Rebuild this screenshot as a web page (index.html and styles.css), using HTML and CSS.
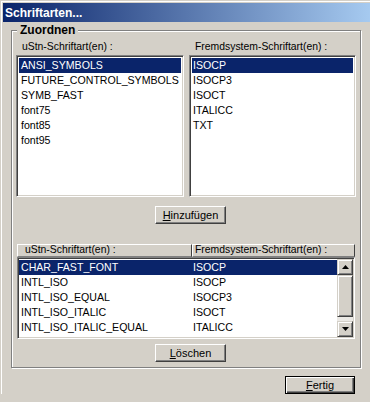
FILE: index.html
```html
<!DOCTYPE html>
<html lang="de">
<head>
  <meta charset="UTF-8" />
  <title>Schriftarten...</title>
  <link rel="stylesheet" href="styles.css">
</head>
<body>

  <div class="window">
    <div class="caption">Schriftarten...</div>

    <div class="client">
      <fieldset class="group">
        <legend>Zuordnen</legend>

        <!-- Two source lists -->
        <div class="pick">
          <div class="pick-col pick-col-a">
            <div class="label">uStn-Schriftart(en) :</div>
            <ul class="listbox">
              <li class="sel">ANSI_SYMBOLS</li>
              <li>FUTURE_CONTROL_SYMBOLS</li>
              <li>SYMB_FAST</li>
              <li>font75</li>
              <li>font85</li>
              <li>font95</li>
            </ul>
          </div>
          <div class="pick-col pick-col-b">
            <div class="label">Fremdsystem-Schriftart(en) :</div>
            <ul class="listbox">
              <li class="sel">ISOCP</li>
              <li>ISOCP3</li>
              <li>ISOCT</li>
              <li>ITALICC</li>
              <li>TXT</li>
            </ul>
          </div>
        </div>

        <div class="btn-row">
          <button class="btn"><u>H</u>inzufügen</button>
        </div>

        <!-- Mapping list -->
        <div class="map">
          <div class="map-head">
            <span class="hcell hcell-a">uStn-Schriftart(en) :</span>
            <span class="hcell hcell-b">Fremdsystem-Schriftart(en) :</span>
          </div>
          <div class="map-list">
            <div class="map-rows">
              <div class="map-row sel"><span class="c1">CHAR_FAST_FONT</span><span>ISOCP</span></div>
              <div class="map-row"><span class="c1">INTL_ISO</span><span>ISOCP</span></div>
              <div class="map-row"><span class="c1">INTL_ISO_EQUAL</span><span>ISOCP3</span></div>
              <div class="map-row"><span class="c1">INTL_ISO_ITALIC</span><span>ISOCT</span></div>
              <div class="map-row"><span class="c1">INTL_ISO_ITALIC_EQUAL</span><span>ITALICC</span></div>
            </div>
            <div class="vscroll">
              <div class="sb-btn">
                <svg width="7" height="4" viewBox="0 0 7 4"><path d="M3.5 0 L7 4 L0 4 Z"/></svg>
              </div>
              <div class="sb-thumb"></div>
              <div class="sb-track"></div>
              <div class="sb-btn">
                <svg width="7" height="4" viewBox="0 0 7 4"><path d="M0 0 L7 0 L3.5 4 Z"/></svg>
              </div>
            </div>
          </div>
        </div>

        <div class="btn-row btn-row-low">
          <button class="btn"><u>L</u>öschen</button>
        </div>
      </fieldset>

      <div class="footer">
        <button class="btn btn-default"><u>F</u>ertig</button>
      </div>
    </div>
  </div>

</body>
</html>
```

FILE: styles.css
```css
html, body {
  margin: 0;
  height: 402px;
  overflow: hidden;
}

body {
  background: #d4d0c8;
  color: #000;
  font-family: "Liberation Sans", Arial, sans-serif;
  font-size: 10.6px;
}

/* Window frame and caption */
.window {
  margin: 1px 0 0 1px;
  padding: 1px 0 0 1px;
  border-left: 1px solid #fff;
  border-top: 1px solid #fff;
}

.caption {
  height: 18px;
  padding: 1px 0 0 2px;
  line-height: 18px;
  background: linear-gradient(to right, #0a246a, #a6caf0);
  color: #fff;
  font-weight: bold;
  font-size: 12px;
}

.client {
  padding: 1px 0 0 8px;
}

/* Group box */
.group {
  margin: 0;
  padding: 0 4px 5px;
  width: 340px;
  min-width: 0;
  border: 1px solid #808080;
  box-shadow: 1px 1px 0 #fff, inset 1px 1px 0 #fff;
}

.group legend {
  margin-left: 1px;
  padding: 0 3px;
  background: #d4d0c8;
  font-weight: bold;
  font-size: 12px;
  line-height: 15px;
}

/* Top lists */
.pick {
  display: flex;
  gap: 5px;
}

.pick-col-a { width: 168px; }
.pick-col-b { width: 167px; }

.label {
  padding: 1px 0 0 6px;
  margin-bottom: 1px;
  line-height: 15px;
  font-size: 10.4px;
}

.listbox {
  box-sizing: border-box;
  height: 142px;
  margin: 0;
  padding: 2px;
  list-style: none;
  background: #fff;
  border: 1px solid;
  border-color: #808080 #fff #fff #808080;
  box-shadow: inset 1px 1px 0 #404040, inset -1px -1px 0 #d4d0c8;
  overflow: hidden;
}

.listbox li {
  padding-left: 2px;
  line-height: 15px;
  white-space: nowrap;
}

.pick-col-b .listbox li {
  padding-left: 1px;
}

.sel {
  background: #0a246a;
  color: #fff;
}

/* Buttons */
.btn-row {
  margin-top: 9px;
  padding-left: 139px;
}

.btn-row-low {
  margin-top: 5px;
}

.btn {
  box-sizing: border-box;
  width: 71px;
  height: 18px;
  padding: 0;
  background: #d4d0c8;
  color: #000;
  font-family: inherit;
  font-size: 11px;
  line-height: 16px;
  border: 1px solid;
  border-color: #fff #404040 #404040 #fff;
  box-shadow: inset -1px -1px 0 #808080;
}

.btn-default {
  width: 70px;
  border: 1px solid #000;
  box-shadow: inset 1px 1px 0 #fff, inset -1px -1px 0 #404040, inset -2px -2px 0 #808080;
}

/* Mapping list */
.map {
  margin-top: 20px;
  padding-left: 1px;
  width: 338px;
}

.map-head {
  display: flex;
  height: 13px;
}

.hcell {
  box-sizing: border-box;
  height: 13px;
  font-size: 10.4px;
  line-height: 9px;
  white-space: nowrap;
  border-top: 1px solid #fff;
  border-left: 1px solid #fff;
  border-right: 1px solid #404040;
  border-bottom: 1px solid #808080;
}

.hcell-a {
  width: 175px;
  padding-left: 7px;
}

.hcell-b {
  flex: 1;
  padding-left: 2px;
}

.map-list {
  box-sizing: border-box;
  display: flex;
  height: 82px;
  padding: 1px;
  background: #fff;
  border: 1px solid;
  border-color: #808080 #fff #fff #808080;
  box-shadow: inset 1px 1px 0 #404040, inset -1px -1px 0 #d4d0c8;
}

.map-rows {
  flex: 1;
  padding-top: 1px;
  overflow: hidden;
}

.map-row {
  display: flex;
  padding-left: 2px;
  line-height: 15px;
  white-space: nowrap;
}

.map-row .c1 {
  width: 172px;
}

/* Scrollbar */
.vscroll {
  display: flex;
  flex-direction: column;
  width: 16px;
  background: #ebe9e5;
}

.sb-btn,
.sb-thumb {
  box-sizing: border-box;
  background: #d4d0c8;
  border: 1px solid;
  border-color: #d4d0c8 #404040 #404040 #d4d0c8;
  box-shadow: inset 1px 1px 0 #fff, inset -1px -1px 0 #808080;
}

.sb-btn {
  display: flex;
  align-items: center;
  justify-content: center;
  height: 16px;
}

.sb-thumb {
  height: 42px;
}

.sb-track {
  flex: 1;
}

/* Footer */
.footer {
  display: flex;
  justify-content: flex-end;
  padding: 8px 15px 0 0;
}
```
